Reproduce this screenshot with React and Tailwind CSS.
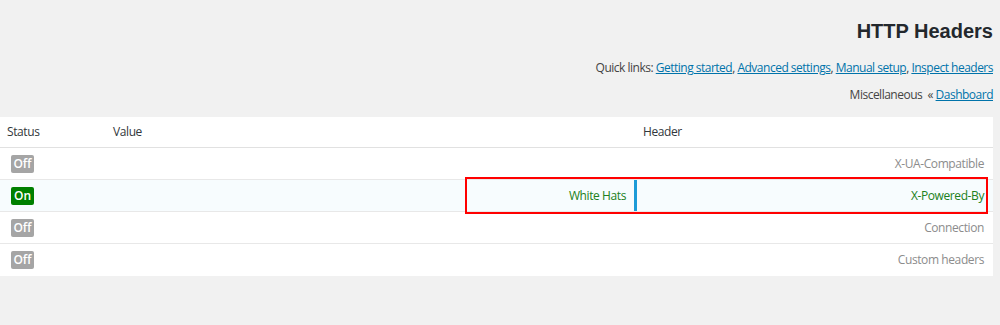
const rows = [
  { on: false, value: "", header: "X-UA-Compatible" },
  { on: true, value: "White Hats", header: "X-Powered-By" },
  { on: false, value: "", header: "Connection" },
  { on: false, value: "", header: "Custom headers" },
];

export default function App() {
  return (
    <div
      className="min-h-[325px] bg-[#f1f1f1] text-[12px] text-[#444]"
      style={{ fontFamily: '"Open Sans", sans-serif' }}
    >
      <div className="pr-[7px] text-right">
        <h1
          className="pt-[19px] text-[20px] font-bold leading-[24px] text-[#23282d]"
          style={{ fontFamily: '"Liberation Sans", Arial, sans-serif' }}
        >
          HTTP Headers
        </h1>
        <p className="mt-[16px] text-[12px] leading-[18px] tracking-[-0.5px]">
          Quick links:{" "}
          <a href="#" className="text-[#0073aa] underline">Getting started</a>,{" "}
          <a href="#" className="text-[#0073aa] underline">Advanced settings</a>,{" "}
          <a href="#" className="text-[#0073aa] underline">Manual setup</a>,{" "}
          <a href="#" className="text-[#0073aa] underline">Inspect headers</a>
        </p>
        <p className="mt-[9px] text-[12px] leading-[18px] tracking-[-0.5px]">
          Miscellaneous &nbsp;«{" "}
          <a href="#" className="text-[#0073aa] underline">Dashboard</a>
        </p>
      </div>

      <div className="relative mt-[13px] w-[993px] bg-white">
        <div className="flex h-[31px] items-center border-b border-[#e1e1e1] text-[12px] tracking-[-0.4px] text-[#32373c]">
          <div className="w-[105px] pl-[7px]">Status</div>
          <div className="w-[529px] pl-[8px]">Value</div>
          <div className="flex-1 pl-[9px]">Header</div>
        </div>
        {rows.map((r, i) => (
          <div
            key={i}
            className={`flex h-[32px] items-center text-[12px] tracking-[-0.4px] ${
              i < rows.length - 1 ? "border-b border-[#e8e8e8]" : ""
            } ${r.on ? "bg-[#f7fcfe]" : ""}`}
          >
            <div className="w-[105px] pl-[11px]">
              <span
                className={`inline-flex h-[18px] w-[23px] items-center justify-center rounded-[2px] text-[12px] font-semibold tracking-normal text-white ${
                  r.on ? "bg-[#008000]" : "bg-[#a5a5a5]"
                }`}
              >
                {r.on ? "On" : "Off"}
              </span>
            </div>
            <div className="w-[529px] pr-[8px] text-right text-[#208020]">
              {r.value}
            </div>
            <div
              className={`flex h-full flex-1 items-center justify-end pr-[9px] ${
                r.on
                  ? "border-l-[3px] border-[#1e9bd7] text-[#208020]"
                  : "text-[#8c8c8c]"
              }`}
            >
              {r.header}
            </div>
          </div>
        ))}
        <div className="pointer-events-none absolute left-[465px] top-[60px] h-[37px] w-[523px] border-2 border-[#ff0000]" />
      </div>
    </div>
  );
}
